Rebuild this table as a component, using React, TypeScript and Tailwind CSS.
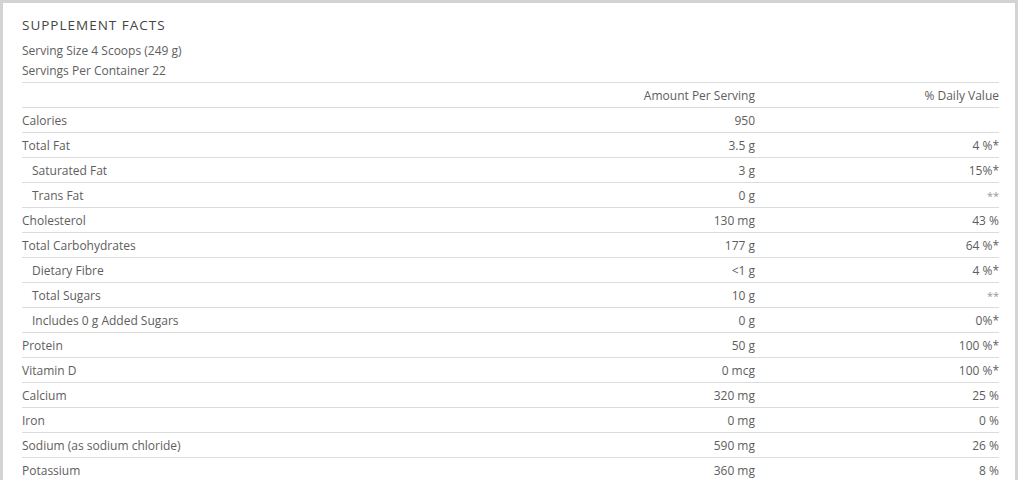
import React from "react";

type Row = { label: string; amount: string; dv: string; indent?: boolean };

const rows: Row[] = [
  { label: "Calories", amount: "950", dv: "" },
  { label: "Total Fat", amount: "3.5 g", dv: "4 %*" },
  { label: "Saturated Fat", amount: "3 g", dv: "15%*", indent: true },
  { label: "Trans Fat", amount: "0 g", dv: "**", indent: true },
  { label: "Cholesterol", amount: "130 mg", dv: "43 %" },
  { label: "Total Carbohydrates", amount: "177 g", dv: "64 %*" },
  { label: "Dietary Fibre", amount: "<1 g", dv: "4 %*", indent: true },
  { label: "Total Sugars", amount: "10 g", dv: "**", indent: true },
  { label: "Includes 0 g Added Sugars", amount: "0 g", dv: "0%*", indent: true },
  { label: "Protein", amount: "50 g", dv: "100 %*" },
  { label: "Vitamin D", amount: "0 mcg", dv: "100 %*" },
  { label: "Calcium", amount: "320 mg", dv: "25 %" },
  { label: "Iron", amount: "0 mg", dv: "0 %" },
  { label: "Sodium (as sodium chloride)", amount: "590 mg", dv: "26 %" },
  { label: "Potassium", amount: "360 mg", dv: "8 %" },
];

export default function App() {
  return (
    <div className="w-[1024px] h-[480px] overflow-hidden bg-white" style={{ fontFamily: '"Open Sans", "Liberation Sans", sans-serif' }}>
      <div className="w-[1018px] border-l-[3px] border-t-[3px] border-r-[3px] border-[#d3d3d3] pl-[19px] pr-[16px] pt-[12px] text-[12px] text-[#5e5e5e]">
        <div className="h-[20px] leading-[20px] text-[13.5px] font-medium uppercase tracking-[1px] text-[#444]">Supplement Facts</div>
        <div className="mt-[6px] leading-[20px]">Serving Size 4 Scoops (249 g)</div>
        <div className="leading-[20px]">Servings Per Container 22</div>
        <div className="border-t border-[#dcdcdc] mt-[1px]">
          <div className="flex h-[25px] items-center pt-[1px] border-b border-[#dcdcdc]">
            <div className="flex-1" />
            <div className="w-[200px] text-right">Amount Per Serving</div>
            <div className="w-[244px] text-right">% Daily Value</div>
          </div>
          {rows.map((r) => (
            <div key={r.label} className="flex h-[25px] items-center pt-[2px] border-b border-[#dcdcdc]">
              <div className={`flex-1 ${r.indent ? "pl-[10px]" : ""}`}>{r.label}</div>
              <div className="w-[200px] text-right">{r.amount}</div>
              <div className={`w-[244px] text-right ${r.dv === "**" ? "text-[#999] text-[11px]" : ""}`}>{r.dv}</div>
            </div>
          ))}
          <div className="flex h-[25px] items-start pt-[6px] text-[11px] text-[#888]">
            <div className="flex-1" />
            <div className="text-right pr-[14px]">Percent Daily Values are based on a 2,000 calorie diet.</div>
          </div>
        </div>
      </div>
    </div>
  );
}
